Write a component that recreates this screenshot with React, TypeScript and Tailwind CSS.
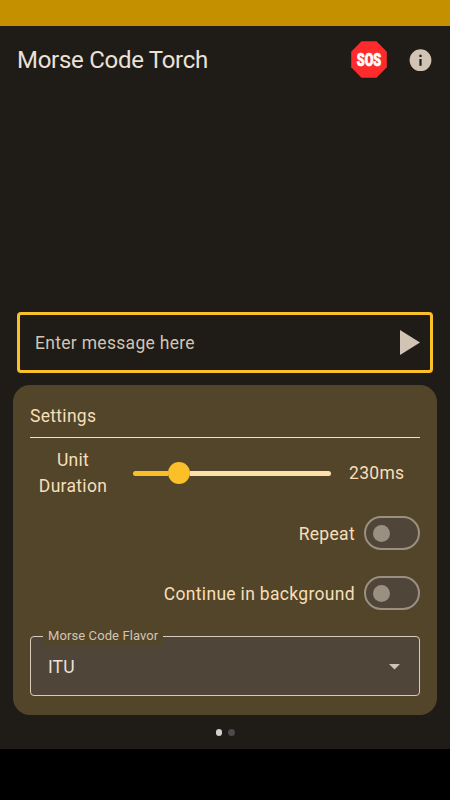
import React from "react";

function Toggle({ label }: { label: string }) {
  return (
    <div className="flex h-[60px] items-center justify-end gap-[9px]">
      <span className="pt-px text-[17.5px] leading-[26px] tracking-[0.32px]">{label}</span>
      <button
        aria-label={label}
        className="flex h-[34px] w-[56px] items-center rounded-full border-2 border-[#9a8f80] bg-[#4f4539] pl-[7px]"
      >
        <span className="size-[17px] rounded-full bg-[#9a8f80]" />
      </button>
    </div>
  );
}

export default function App() {
  return (
    <div className="flex h-[800px] w-[450px] flex-col overflow-hidden bg-black font-['Roboto',sans-serif]">
      <div className="h-[26px] shrink-0 bg-[#c59000]" />
      <div className="flex h-[723px] shrink-0 flex-col bg-[#1f1b16]">
        <header className="flex h-[68px] items-center pr-[18px] pl-[17px]">
          <h1 className="grow text-[24px] leading-8 tracking-[-0.28px] text-[#eae1d9]">Morse Code Torch</h1>
          <svg width="36" height="38" viewBox="0 0 36 38" className="mr-[22px] overflow-visible">
            <path d="M10.5 0.3h15L35.8 10.8v15.4L25.5 36.7h-15L0.2 26.2V10.8z" fill="#ff2a2c" />
            <text
              x="18"
              y="24.8"
              textAnchor="middle"
              textLength="24.5"
              lengthAdjust="spacingAndGlyphs"
              fontSize="17.5"
              fontWeight="900"
              fill="#fff"
              stroke="#fff"
              strokeWidth="0.7"
            >
              SOS
            </text>
          </svg>
          <svg width="23" height="23" viewBox="0 0 23 23">
            <circle cx="11.5" cy="11.2" r="10.9" fill="#d2c4b4" />
            <path d="M10.4 5.7h2.2v2.2h-2.2zM10.4 10.1h2.2v6.6h-2.2z" fill="#1f1b16" />
          </svg>
        </header>

        <main className="mt-[218px] flex flex-col">
          <div className="mx-[17px] flex h-[61px] items-center justify-between rounded-[4px] border-3 border-[#fbbf2a] pr-[10px] pl-[15px]">
            <span className="pt-[2px] text-[17.5px] tracking-[0.3px] text-[#d2c4b4]">Enter message here</span>
            <svg width="20" height="26" viewBox="0 0 20 26">
              <path d="M0 0.1v25L20 12.6z" fill="#d2c4b4" />
            </svg>
          </div>

          <section className="mx-[13px] mt-[12px] flex h-[330px] flex-col rounded-[17px] bg-[#53452a] px-[17px] text-[#f7dfb9]">
            <h2 className="mt-[18px] text-[17.5px] leading-[26px] tracking-[0.3px]">Settings</h2>
            <div className="mt-[8px] h-px shrink-0 bg-[#eee0cf]" />
            <div className="mt-[9px] flex h-[52px] items-center text-[17.5px] leading-[26px] tracking-[0.3px]">
              <div className="w-[86px] text-center">
                Unit
                <br />
                Duration
              </div>
              <div className="ml-[17px] flex w-[198px] items-center">
                <span className="h-[5px] w-[35px] rounded-l-full bg-[#fbbf2a]" />
                <span className="size-[22px] rounded-full bg-[#fbbf2a]" />
                <span className="h-[5px] grow rounded-r-full bg-[#ffdfac]" />
              </div>
              <span className="ml-[18px]">230ms</span>
            </div>
            <div className="mt-[4px]">
              <Toggle label="Repeat" />
              <Toggle label="Continue in background" />
            </div>
            <div className="relative mt-[13px] flex h-[60px] items-center justify-between rounded-[4px] border border-[#d9ccbd] bg-[#4f4539] pr-[19px] pl-[17px]">
              <span className="absolute -top-[10px] left-[12px] h-[18px] w-[120px] bg-[#53452a] px-[5px] text-[13px] leading-[18px] tracking-[0.1px] whitespace-nowrap text-[#d2c4b4]">
                Morse Code Flavor
              </span>
              <span className="pt-[2px] text-[17.5px] tracking-[0.1px] text-[#eae1d9]">ITU</span>
              <svg width="11" height="8" viewBox="0 0 11 8">
                <path d="M0 2h11L5.5 7.6z" fill="#d2c4b4" />
              </svg>
            </div>
          </section>

          <div className="mt-[14px] flex justify-center gap-[6px]">
            <span className="size-[6.5px] rounded-full bg-[#d0d0d0]" />
            <span className="size-[6.5px] rounded-full bg-[#4b4b4b]" />
          </div>
        </main>
      </div>
    </div>
  );
}
